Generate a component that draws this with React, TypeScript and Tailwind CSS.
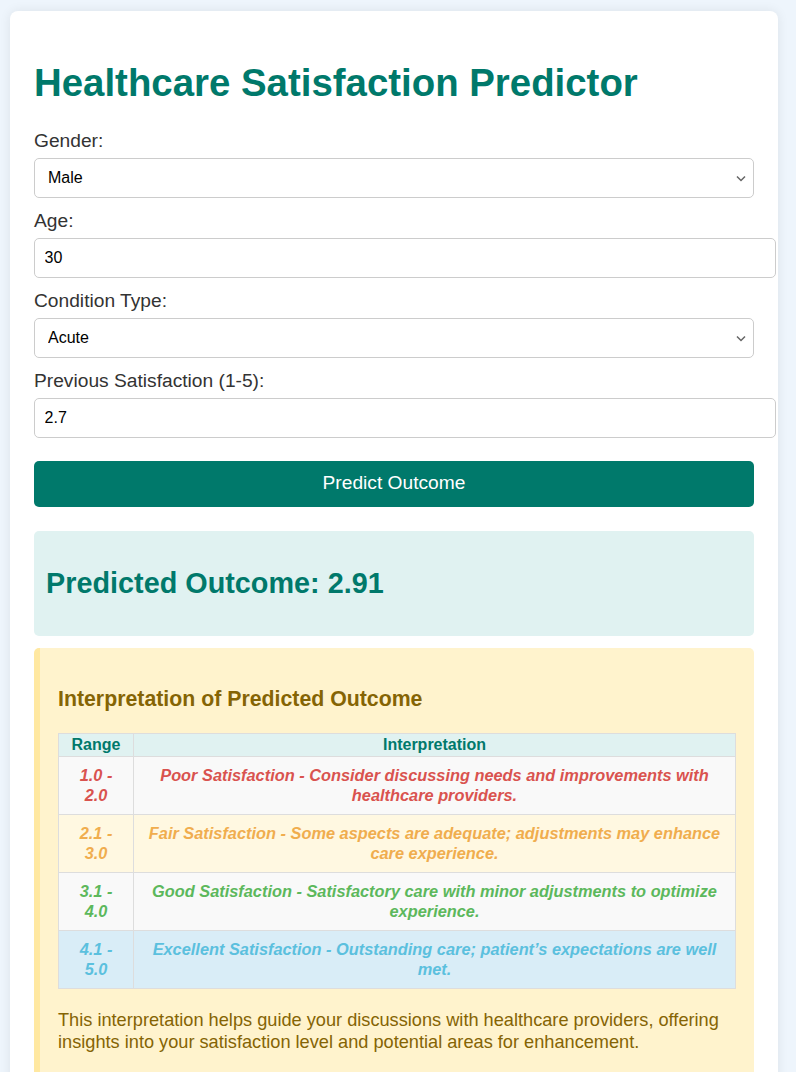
import React from "react";

const rows = [
  {
    range: "1.0 - 2.0",
    text: "Poor Satisfaction - Consider discussing needs and improvements with healthcare providers.",
    color: "text-[#d9534f]",
    bg: "bg-[#f9f9f9]",
  },
  {
    range: "2.1 - 3.0",
    text: "Fair Satisfaction - Some aspects are adequate; adjustments may enhance care experience.",
    color: "text-[#f0ad4e]",
    bg: "bg-[#fff8e1]",
  },
  {
    range: "3.1 - 4.0",
    text: "Good Satisfaction - Satisfactory care with minor adjustments to optimize experience.",
    color: "text-[#5cb85c]",
    bg: "bg-[#f9f9f9]",
  },
  {
    range: "4.1 - 5.0",
    text: "Excellent Satisfaction - Outstanding care; patient\u2019s expectations are well met.",
    color: "text-[#5bc0de]",
    bg: "bg-[#d9edf7]",
  },
];

function Select({ value, options }: { value: string; options: string[] }) {
  return (
    <div className="relative mb-[12px] w-[720px]">
      <select
        defaultValue={value}
        className="block h-[40px] w-[720px] appearance-none rounded-[5px] border border-[#ccc] bg-white pl-[13px] pr-[30px] text-[16px] text-black"
      >
        {options.map((o) => (
          <option key={o}>{o}</option>
        ))}
      </select>
      <svg
        className="pointer-events-none absolute right-[8px] top-[17px]"
        width="10"
        height="7"
        viewBox="0 0 10 7"
        fill="none"
      >
        <path d="M1 1.5l4 4 4-4" stroke="#666" strokeWidth="1.5" />
      </svg>
    </div>
  );
}

export default function App() {
  return (
    <div
      className="min-h-[1072px] bg-[#eef5fc] pt-[11px] pl-[10px]"
      style={{ fontFamily: '"Liberation Sans", Arial, sans-serif' }}
    >
      <div className="w-[768px] min-h-[1100px] rounded-[8px] bg-white px-[24px] pt-[24px] shadow-[0_0_12px_rgba(0,0,0,0.08)]">
        <h1 className="my-[25.7px] text-[38.4px] font-bold leading-[44px] text-[#00796b]">
          Healthcare Satisfaction Predictor
        </h1>

        <label className="mb-[6px] block text-[19.2px] leading-[22px] text-[#333]">Gender:</label>
        <Select value="Male" options={["Male", "Female"]} />

        <label className="mb-[6px] block text-[19.2px] leading-[22px] text-[#333]">Age:</label>
        <input
          className="mb-[12px] block h-[40px] w-[742px] rounded-[5px] border border-[#ccc] bg-white px-[9.6px] text-[16px] text-black"
          defaultValue="30"
        />

        <label className="mb-[6px] block text-[19.2px] leading-[22px] text-[#333]">Condition Type:</label>
        <Select value="Acute" options={["Acute", "Chronic"]} />

        <label className="mb-[6px] block text-[19.2px] leading-[22px] text-[#333]">Previous Satisfaction (1-5):</label>
        <input
          className="block h-[40px] w-[742px] rounded-[5px] border border-[#ccc] bg-white px-[9.6px] text-[16px] text-black"
          defaultValue="2.7"
        />

        <button className="mt-[22.5px] block h-[46px] w-[720px] rounded-[5px] bg-[#00796b] text-[19.2px] text-white">
          Predict Outcome
        </button>

        <div className="mt-[24px] rounded-[5px] bg-[#e0f2f1] p-[12px]">
          <h2 className="my-[24px] text-[28.8px] font-bold leading-[33px] text-[#00796b]">
            Predicted Outcome: 2.91
          </h2>
        </div>

        <div className="mt-[12px] rounded-[5px] border-l-[6px] border-[#ffe8a1] bg-[#fff3cd] px-[18px] pt-[18px] pb-[40px]">
          <h3 className="my-[21.3px] text-[21.3px] font-bold leading-[24.5px] text-[#856404]">
            Interpretation of Predicted Outcome
          </h3>
          <table className="w-[678px] table-fixed border-collapse border border-[#ddd] text-[16px] leading-[19.2px]">
            <thead>
              <tr className="bg-[#e0f2f1]">
                <th className="w-[75px] border border-[#ddd] px-[9.6px] py-[1.5px] font-bold text-[#00796b]">Range</th>
                <th className="border border-[#ddd] px-[9.6px] py-[1.5px] font-bold text-[#00796b]">Interpretation</th>
              </tr>
            </thead>
            <tbody>
              {rows.map((r) => (
                <tr key={r.range} className={r.bg}>
                  <td className={`h-[58px] border border-[#ddd] px-[9.6px] py-0 text-center text-[16.35px] font-bold italic ${r.color}`}>
                    {r.range}
                  </td>
                  <td className={`h-[58px] border border-[#ddd] px-[9.6px] py-0 text-center text-[16.35px] font-bold italic ${r.color}`}>
                    {r.text}
                  </td>
                </tr>
              ))}
            </tbody>
          </table>
          <p className="mt-[21px] text-[18.2px] leading-[21.6px] text-[#856404]">
            This interpretation helps guide your discussions with healthcare providers, offering insights into your
            satisfaction level and potential areas for enhancement.
          </p>
        </div>
      </div>
    </div>
  );
}
